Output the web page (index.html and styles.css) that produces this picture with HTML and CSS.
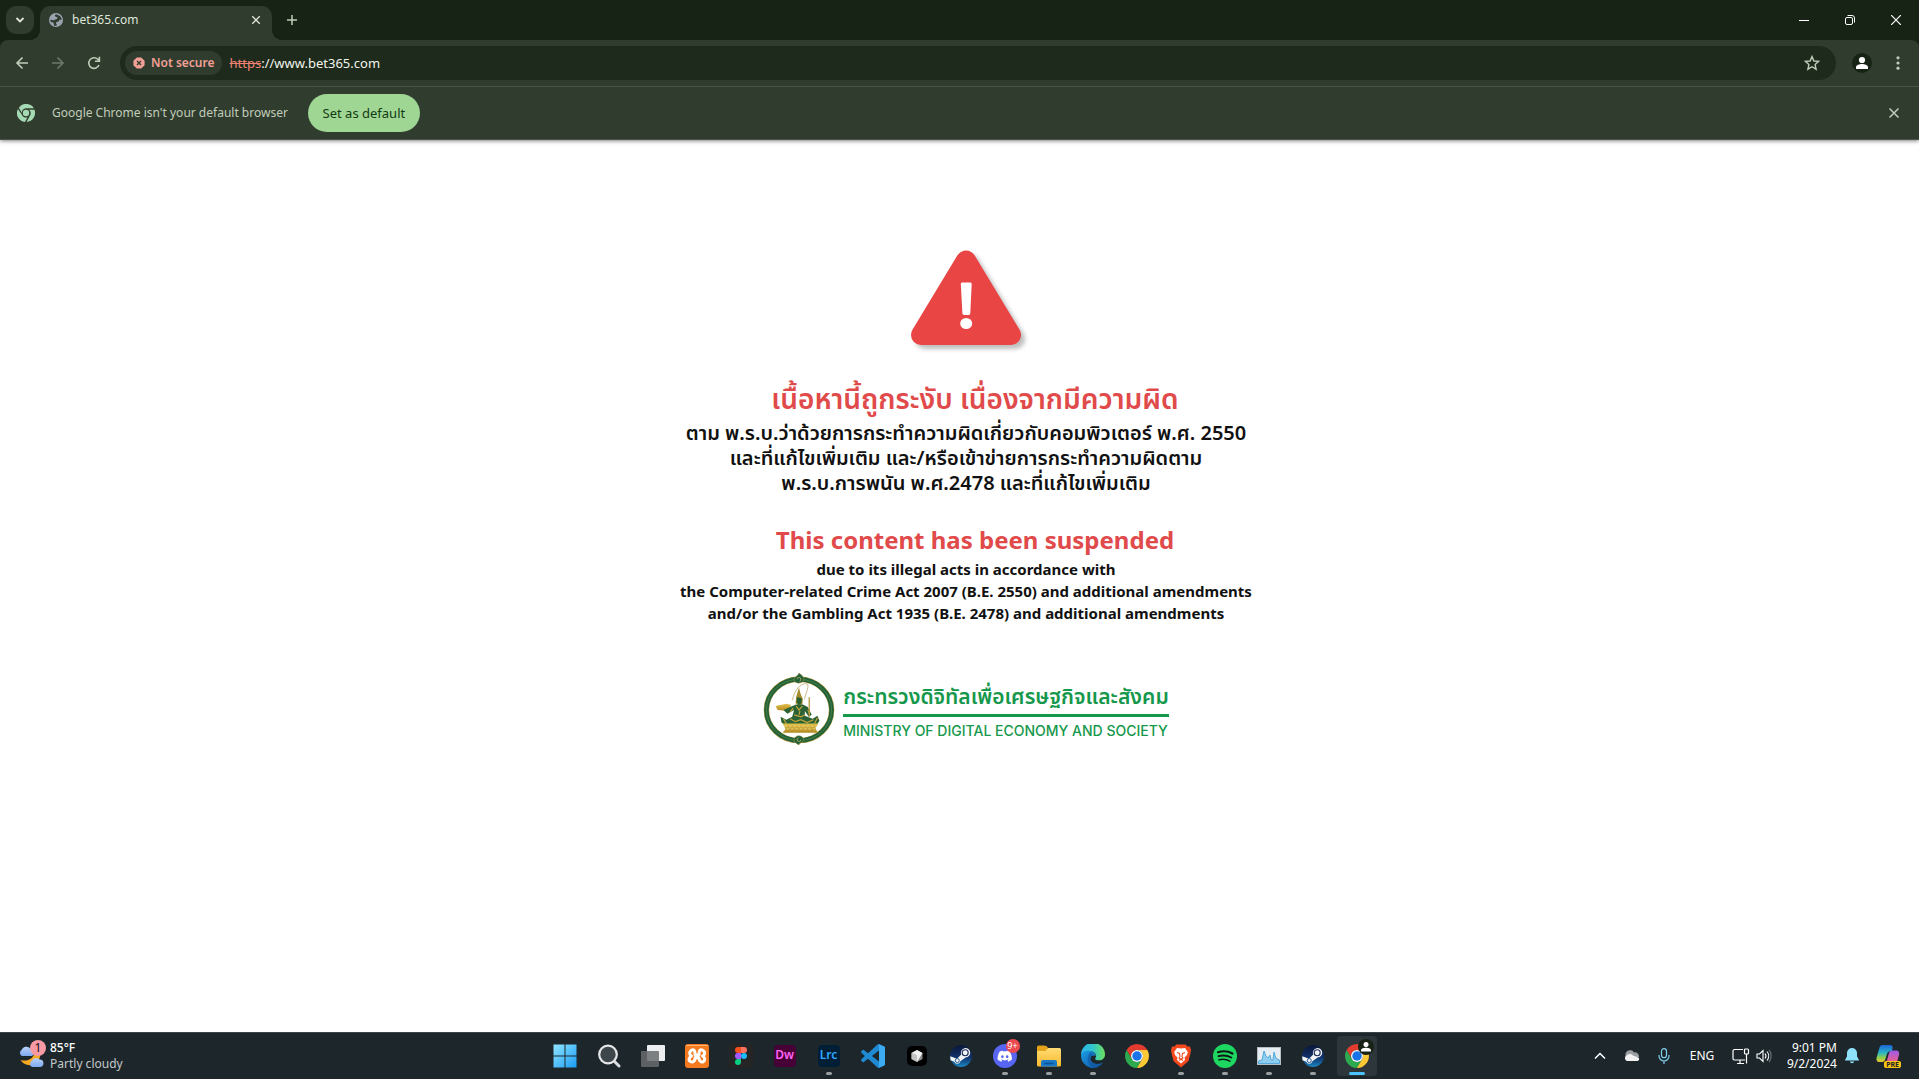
FILE: index.html
```html
<!DOCTYPE html>
<html lang="en">
<head>
<meta charset="utf-8">
<meta name="viewport" content="width=device-width, initial-scale=1">
<title>bet365.com</title>
<link rel="stylesheet" href="styles.css">
</head>
<body>
<svg class="defs" width="0" height="0" aria-hidden="true">
  <defs>
    <linearGradient id="win" x1="0" y1="0" x2="1" y2="1"><stop offset="0" stop-color="#8fe6ff"/><stop offset="1" stop-color="#1a9bf5"/></linearGradient>
    <linearGradient id="steam-bg" x1="0" y1="0" x2="0" y2="1"><stop offset="0" stop-color="#0b1638"/><stop offset=".55" stop-color="#10306a"/><stop offset="1" stop-color="#1b86c2"/></linearGradient>
    <linearGradient id="edge-top" x1="0" y1="0" x2="1" y2="0"><stop offset="0" stop-color="#2fb4ee"/><stop offset=".5" stop-color="#2fc6c9"/><stop offset="1" stop-color="#6ee05a"/></linearGradient>
    <linearGradient id="edge-low" x1="0" y1="0" x2="1" y2="1"><stop offset="0" stop-color="#1b9de8"/><stop offset="1" stop-color="#0f4f9c"/></linearGradient>
    <linearGradient id="folder" x1="0" y1="0" x2="0" y2="1"><stop offset="0" stop-color="#ffdc73"/><stop offset="1" stop-color="#f7b92d"/></linearGradient>
    <linearGradient id="gold" x1="0" y1="0" x2="0" y2="1"><stop offset="0" stop-color="#e3c14b"/><stop offset="1" stop-color="#b28a22"/></linearGradient>
    <linearGradient id="cloud" x1="0" y1="0" x2="0" y2="1"><stop offset="0" stop-color="#b9d3fb"/><stop offset="1" stop-color="#7ea8ee"/></linearGradient>
    <linearGradient id="cop-a" x1="0" y1="0" x2="0" y2="1"><stop offset="0" stop-color="#1c63d8"/><stop offset=".45" stop-color="#29b5c8"/><stop offset=".75" stop-color="#8ed04a"/><stop offset="1" stop-color="#f4c430"/></linearGradient>
    <linearGradient id="cop-b" x1="0" y1="0" x2="0" y2="1"><stop offset="0" stop-color="#9b5be8"/><stop offset="1" stop-color="#f0608a"/></linearGradient>
    <symbol id="steam" viewBox="0 0 24 24">
      <circle cx="12" cy="12" r="11" fill="url(#steam-bg)"/>
      <path d="M1.2 12.2 8 14.8 12.2 10.500A4.700 4.700 0 1 1 16.600 13.400L11.400 17.300A3.200 3.200 0 0 1 5.300 17.800L1.500 16.200Z" fill="#f2f5f8"/>
      <circle cx="16.200" cy="8.800" r="3" fill="none" stroke="#1a2c55" stroke-width="1.100"/>
      <circle cx="8.300" cy="16.500" r="2" fill="none" stroke="#1d4a80" stroke-width=".9"/>
    </symbol>
    <symbol id="chrome" viewBox="0 0 48 48">
      <path fill="#e33b2e" d="M24 12H44.780A24 24 0 0 0 3.220 12L13.610 30A12 12 0 0 1 24 12Z"/>
      <path fill="#2da94f" d="M13.610 30 3.220 12A24 24 0 0 0 24 48L34.390 30A12 12 0 0 1 13.610 30Z"/>
      <path fill="#fcc934" d="M34.390 30 24 48A24 24 0 0 0 44.780 12H24A12 12 0 0 1 34.390 30Z"/>
      <circle cx="24" cy="24" r="12" fill="#fff"/><circle cx="24" cy="24" r="9.500" fill="#1a73e8"/>
    </symbol>
    <symbol id="cross" viewBox="0 0 12 12"><path d="M1.500 1.500 10.500 10.500M10.500 1.500 1.500 10.500" fill="none" stroke="currentColor" stroke-width="1.500"/></symbol>
  </defs>
</svg>

<header class="browser">
  <div class="tabstrip">
    <button class="tab-search" aria-label="Search tabs"><svg width="10" height="10" viewBox="0 0 10 10"><path d="M1.500 3 5 6.500 8.500 3" fill="none" stroke="currentColor" stroke-width="1.800"/></svg></button>
    <div class="tab">
      <svg width="14" height="14" viewBox="0 0 14 14"><circle cx="7" cy="7" r="7" fill="#9aa3ae"/><path d="M6.500 1.500C5 3 7 4 8 4.200S8.500 6 7 6.200 5.500 7.500 4.500 7.300 1.500 6.200 1.200 7.500c.3 2 1.400 1.700 2.300 1.800S5 10.500 5 12.500c1 .5 2.500.3 3-.2C8 11 6.500 10.500 7 9.500S10 9 10 8s.5-1.500 2.700-1.300C12.500 4 10 1.500 6.500 1.500Z" fill="#303c2e"/></svg>
      <span class="tab-title">bet365.com</span>
      <button class="tab-close" aria-label="Close tab"><svg width="10" height="10"><use href="#cross"/></svg></button>
    </div>
    <button class="new-tab" aria-label="New tab"><svg width="12" height="12" viewBox="0 0 12 12"><path d="M6 1V11M1 6H11" stroke="currentColor" stroke-width="1.500"/></svg></button>
    <div class="window-controls">
      <button aria-label="Minimize"><svg width="10" height="10" viewBox="0 0 10 10"><path d="M0 5.500H10" stroke="currentColor"/></svg></button>
      <button aria-label="Restore"><svg width="10" height="10" viewBox="0 0 10 10" fill="none" stroke="currentColor"><rect x=".5" y="2.500" width="7" height="7" rx="1.500"/><path d="M2.500.5H7A2.500 2.500 0 0 1 9.500 3V7.500"/></svg></button>
      <button aria-label="Close"><svg width="10" height="10" viewBox="0 0 10 10"><path d="M0 0 10 10M10 0 0 10" stroke="currentColor" stroke-width="1.200"/></svg></button>
    </div>
  </div>

  <div class="toolbar">
    <button class="tool" aria-label="Back"><svg width="14" height="14" viewBox="0 0 14 14" fill="none" stroke="currentColor" stroke-width="1.600"><path d="M13 7H2M7.500 1.500 2 7 7.500 12.500"/></svg></button>
    <button class="tool dim" aria-label="Forward"><svg width="14" height="14" viewBox="0 0 14 14" fill="none" stroke="currentColor" stroke-width="1.600"><path d="M1 7H12M6.500 1.500 12 7 6.500 12.500"/></svg></button>
    <button class="tool" aria-label="Reload"><svg width="14" height="14" viewBox="0 0 14 14" fill="none" stroke="currentColor" stroke-width="1.600"><path d="M12 9A5.300 5.300 0 1 1 10.800 3.300L12.300 4.800M12.400.8V5.200H8"/></svg></button>
    <div class="omnibox">
      <button class="chip"><svg width="12" height="12" viewBox="0 0 12 12"><path d="M3.800.4H8.200L11.600 3.800V8.200L8.200 11.600H3.800L.4 8.200V3.800Z" fill="#f2a097"/><path d="M4 4 8 8M8 4 4 8" stroke="#303c2e" stroke-width="1.400"/></svg>Not secure</button>
      <label class="url"><s>https</s><input type="text" value="://www.bet365.com" aria-label="Address"></label>
      <button class="star" aria-label="Bookmark this tab"><svg width="16" height="16" viewBox="0 0 16 16"><path d="M8 1.600 9.900 6 14.600 6.400 11.100 9.500 12.100 14.200 8 11.700 3.900 14.200 4.900 9.500 1.400 6.400 6.100 6Z" fill="none" stroke="currentColor" stroke-width="1.400"/></svg></button>
    </div>
    <button class="tool profile" aria-label="Profile"><svg width="20" height="20" viewBox="0 0 20 20"><circle cx="10" cy="10" r="10" fill="#172315"/><circle cx="10" cy="7" r="3.100" fill="#fff"/><path d="M4 16V14.200C4 12 7.500 11 10 11S16 12 16 14.200V16Z" fill="#fff"/></svg></button>
    <button class="tool" aria-label="Menu"><svg width="4" height="14" viewBox="0 0 4 14" fill="currentColor"><circle cx="2" cy="1.800" r="1.600"/><circle cx="2" cy="7" r="1.600"/><circle cx="2" cy="12.200" r="1.600"/></svg></button>
  </div>

  <div class="infobar">
    <svg width="18" height="18" viewBox="0 0 48 48" fill="#a5d9b4"><path d="M24 11H45A24 24 0 0 0 5 10L13 24A11.500 11.500 0 0 1 24 11Z"/><path d="M12.500 28 2.500 13A24 24 0 0 0 21 48L28 35.500A12 12 0 0 1 12.500 28Z"/><path d="M35.500 29 25.500 48A24 24 0 0 0 46.500 15H32A12 12 0 0 1 35.500 29Z"/><circle cx="24" cy="24" r="8.500"/></svg>
    <span>Google Chrome isn't your default browser</span>
    <button class="set-default">Set as default</button>
    <button class="info-close" aria-label="Dismiss"><svg width="12" height="12"><use href="#cross"/></svg></button>
  </div>
</header>

<main class="page">
  <svg class="warning" width="116" height="102" viewBox="0 0 116 102" role="img" aria-label="Warning">
    <path d="M55 10.500 100 85H10Z" fill="#e94545" stroke="#e94545" stroke-width="20" stroke-linejoin="round"/>
    <path d="M51 32.500H59.500Q60.800 32.500 60.700 34L59.300 63Q59.200 65 58 65H53Q51.500 65 51.400 63L49.800 34Q49.700 32.500 51 32.500Z" fill="#fff"/>
    <ellipse cx="55.200" cy="73.500" rx="6" ry="5.500" fill="#fff"/>
  </svg>
  <section class="notice thai" lang="th">
    <h1>เนื้อหานี้ถูกระงับ เนื่องจากมีความผิด</h1>
    <p>ตาม พ.ร.บ.ว่าด้วยการกระทำความผิดเกี่ยวกับคอมพิวเตอร์ พ.ศ. 2550<br>และที่แก้ไขเพิ่มเติม และ/หรือเข้าข่ายการกระทำความผิดตาม<br>พ.ร.บ.การพนัน พ.ศ.2478 และที่แก้ไขเพิ่มเติม</p>
  </section>
  <section class="notice english">
    <h1>This content has been suspended</h1>
    <p>due to its illegal acts in accordance with<br>the Computer-related Crime Act 2007 (B.E. 2550) and additional amendments<br>and/or the Gambling Act 1935 (B.E. 2478) and additional amendments</p>
  </section>
  <div class="ministry">
    <svg width="72" height="72" viewBox="0 0 72 74" role="img" aria-label="Ministry emblem">
      <ellipse cx="36" cy="38" rx="33.500" ry="31.500" fill="#fff" stroke="#b79b3c" stroke-width="5.600"/>
      <ellipse cx="36" cy="38" rx="33.500" ry="31.500" fill="none" stroke="#20603a" stroke-width="4.600"/>
      <ellipse cx="36" cy="38" rx="33.500" ry="31.500" fill="none" stroke="#5f8a45" stroke-width=".7"/>
      <path d="M36 0C39 2 41 4 41 6.500S38 10.500 35.500 10.500 30.500 8.500 31 6C32 3.500 35 3 36 0ZM36 74C33 72.500 31 71 31 68.500S34 64 36.500 64.500 41.500 67 40.500 69.500 37 71 36 74Z" fill="#20603a" stroke="#b79b3c" stroke-width=".5"/>
      <path d="M34 6.500a2 2 0 1 1 2.500 2M38 68.500a2 2 0 1 1-2.500-2" fill="none" stroke="#c9b25a" stroke-width=".8"/>
      <path d="M29 28C32 16 39 9 45 11.500 46 16 43 21 41.500 27" fill="none" stroke="#c8b987" stroke-width="1"/>
      <path d="M36 15 37.500 21 40 27 39.500 32 36 34 32.500 31 33 25Z" fill="#a78a2e"/>
      <path d="M34 25 39 26 38.500 31 36 33 33.500 30Z" fill="#275f35"/>
      <path d="M12 34 23 31.500 28 33 25 39 14 38Z" fill="url(#gold)"/>
      <path d="M27 35 33 32.500H40L45 35 49 43 46 45 42 39 42 44 50 47 55 44 57 49 54 54 22 54 18 51 17 45 23 48 29 45 31 38 24 42 20 38Z" fill="#2a6236"/>
      <path d="M33 34 36 38 39.500 34M31 43 38 45 42 43M27 47 32 50 38 48 44 51 51 48M20 47 23 52M55 46 52 52M37 39 36 43M30 36 27 40M45 38 47 42" fill="none" stroke="#c6a43b" stroke-width="1.200"/>
      <path d="M46.500 25V45" stroke="#b69537" stroke-width="1.300"/>
      <path d="M19 52H56L53 56 54 59 56 61.500H19L22 58 21 55Z" fill="url(#gold)"/>
      <path d="M21 54.500H54M23 57.500H53" stroke="#efd980" stroke-width=".9" stroke-dasharray="3 1.500"/>
    </svg>
    <div class="ministry-name">
      <span class="name-th" lang="th">กระทรวงดิจิทัลเพื่อเศรษฐกิจและสังคม</span>
      <span class="name-en">MINISTRY OF DIGITAL ECONOMY AND SOCIETY</span>
    </div>
  </div>
</main>

<footer class="taskbar">
  <button class="weather">
    <span class="weather-icon">
      <svg width="26" height="28" viewBox="0 0 26 28"><path d="M22 8C23 15 21 20 17 22 11 25 5 22 2.500 18 9 20 16 17 17 9Z" fill="#f7a823"/><path d="M4 14A3.500 3.500 0 0 1 3.500 8 5 5 0 0 1 12 6.500 4 4 0 0 1 14 14Z" fill="url(#cloud)"/><path d="M14 25A3.500 3.500 0 0 1 13.500 19 5 5 0 0 1 21.500 17.500 3.800 3.800 0 0 1 22.500 25Z" fill="url(#cloud)"/></svg>
      <span class="badge pink">1</span>
    </span>
    <span class="weather-text"><b>85°F</b><span>Partly cloudy</span></span>
  </button>

  <nav class="apps" aria-label="Taskbar">
    <button aria-label="Start"><svg width="24" height="24" viewBox="0 0 24 24" fill="url(#win)"><path d="M.5.5H11.500V11.500H.5ZM12.500.5H23.500V11.500H12.500ZM.5 12.500H11.500V23.500H.5ZM12.500 12.500H23.500V23.500H12.500Z"/></svg></button>
    <button aria-label="Search"><svg width="24" height="24" viewBox="0 0 24 24"><path d="M17 17 22 22" stroke="#d9dcde" stroke-width="3" stroke-linecap="round"/><circle cx="11" cy="10.500" r="8.800" fill="#3d474b" stroke="#e4e6e7" stroke-width="2.200"/></svg></button>
    <button aria-label="Task view"><svg width="24" height="24" viewBox="0 0 24 24"><rect x="6" y="1" width="18" height="16" rx="1" fill="#eceeef"/><rect x="0" y="7" width="18" height="16" rx="1" fill="#686c6e" fill-opacity=".85"/></svg></button>
    <button aria-label="XAMPP"><svg width="24" height="24" viewBox="0 0 24 24"><rect width="24" height="24" rx="3" fill="#f47a20"/><path d="M1 1.500H23" stroke="#ffb274"/><g fill="none" stroke="#fff" stroke-width="3" stroke-linecap="round" stroke-linejoin="round"><path d="M6 6.500C9 4.500 10 7 10 9.500V11H14V9.500C14 7 15 4.500 18 6.500S19.500 11 17.500 12C20 13.500 20.500 16 18.500 17.500S14 17 14 14M10 14C10 17 8 19 5.500 17.500S4 13.500 6.500 12C4.500 11 4 8.500 6 6.500M10 14H14"/></g></svg></button>
    <button aria-label="Figma"><svg width="24" height="24" viewBox="0 0 24 24"><rect width="24" height="24" rx="3" fill="#252525"/><path d="M12 3H9a3 3 0 0 0 0 6h3Z" fill="#f24e1e"/><path d="M12 3h3a3 3 0 0 1 0 6h-3Z" fill="#ff7262"/><path d="M12 9H9a3 3 0 0 0 0 6h3Z" fill="#a259ff"/><circle cx="15" cy="12" r="3" fill="#1abcfe"/><path d="M12 15H9a3 3 0 1 0 3 3Z" fill="#0acf83"/></svg></button>
    <button aria-label="Dreamweaver"><span class="adobe dw">Dw</span></button>
    <button class="running" aria-label="Lightroom Classic"><span class="adobe lrc">Lrc</span></button>
    <button aria-label="Visual Studio Code"><svg width="24" height="24" viewBox="0 0 24 24"><path fill="#1f8ad2" d="M23.150 2.587L18.210.21a1.494 1.494 0 0 0-1.705.29l-9.460 8.630-4.120-3.128a.999.999 0 0 0-1.276.057L.327 7.261A1 1 0 0 0 .326 8.740L3.899 12 .326 15.260a1 1 0 0 0 .001 1.479L1.650 17.940a.999.999 0 0 0 1.276.057l4.120-3.128 9.460 8.630a1.492 1.492 0 0 0 1.704.29l4.942-2.377A1.500 1.500 0 0 0 24 20.060V3.939a1.500 1.500 0 0 0-.85-1.352zm-5.146 14.861L10.826 12l7.178-5.448v10.896z"/><path fill="#3cabf2" d="M18 .3 23.150 2.587A1.500 1.500 0 0 1 24 3.939V20.060A1.500 1.500 0 0 1 23.150 21.400L18 23.700Z"/></svg></button>
    <button aria-label="Cursor"><svg width="20" height="20" viewBox="0 0 20 20"><rect width="20" height="20" rx="5" fill="#000"/><path d="M10 4 15.500 7V13L10 16 4.500 13V7Z" fill="#8d8d8d"/><path d="M4.500 7 10 4 15.500 7 10 16V9.500Z" fill="#f1f1f1"/><path d="M4.500 7 10 9.500V16L4.500 13Z" fill="#c4c4c4"/></svg></button>
    <button aria-label="Steam"><svg width="24" height="24"><use href="#steam"/></svg></button>
    <button class="running" aria-label="Discord"><svg width="24" height="24" viewBox="0 0 24 24"><circle cx="12" cy="12" r="12" fill="#5865f2"/><path transform="translate(4.600 5) scale(.6)" fill="#fff" d="M20.317 4.370a19.791 19.791 0 0 0-4.885-1.515.074.074 0 0 0-.079.037c-.211.375-.445.865-.608 1.250-1.845-.276-3.680-.276-5.487 0-.164-.393-.406-.874-.618-1.250a.077.077 0 0 0-.079-.037A19.736 19.736 0 0 0 3.676 4.370C.533 9.046-.319 13.580.099 18.058c2.053 1.508 4.041 2.423 5.993 3.030.5-.6.950-1.300 1.310-2.022a13 13 0 0 1-1.914-1.100l.372-.291c3.928 1.793 8.180 1.793 12.061 0l.451.302a12.300 12.300 0 0 1-1.914 1.100c.36.700.810 1.400 1.310 2.020 1.961-.607 3.950-1.522 6.002-3.030.500-5.177-.838-9.674-3.549-13.660zM8.020 15.331c-1.183 0-2.157-1.086-2.157-2.419s.956-2.419 2.157-2.419 2.176 1.095 2.157 2.419c0 1.333-.956 2.419-2.157 2.419zm7.975 0c-1.183 0-2.157-1.086-2.157-2.419s.955-2.419 2.157-2.419 2.176 1.095 2.157 2.419c0 1.333-.946 2.419-2.157 2.419z"/></svg><span class="badge red">9+</span></button>
    <button class="running" aria-label="File Explorer"><svg width="24" height="24" viewBox="0 0 24 24"><path d="M0 3A1.500 1.500 0 0 1 1.500 1.500H8L10.500 4H0Z" fill="#e09b12"/><path d="M0 3V8H9L11 4 9.500 2Z" fill="#e3a31c"/><path d="M0 7H8.500L11 4H22.500A1.500 1.500 0 0 1 24 5.500V21A1.500 1.500 0 0 1 22.500 22.500H1.500A1.500 1.500 0 0 1 0 21Z" fill="url(#folder)"/><path d="M4 22.500V18A2 2 0 0 1 6 16H18A2 2 0 0 1 20 18V22.500Z" fill="#1978c8"/><path d="M8 19.500H16" stroke="#0d4f92" stroke-width="1.500" stroke-linecap="round"/></svg></button>
    <button class="running" aria-label="Edge"><svg width="24" height="24" viewBox="0 0 24 24"><path d="M0 11A12 12 0 0 1 24 10.500C24 14 21.500 16.300 18 16.300 15 16.300 13.800 15.500 14.300 14.500 16.500 11 13.500 7 9 7 5 7 1.500 8.500 0 11Z" fill="url(#edge-top)"/><path d="M0 12C0 8.500 4 6.500 8 6.800 12 7 14.500 9.500 14.700 12 12 10.500 9.500 12 9.500 14.500 9.500 19 15.500 22 22 18.500A12 12 0 0 1 0 12Z" fill="url(#edge-low)"/><path d="M9.200 8.500C5 12 6 20.500 13 23.900A12 12 0 0 0 22 18.500C16 21.500 9.500 19 9.500 14.500 9.500 12 11 11 12.500 11 12 9.500 10.500 8.500 9.200 8.500Z" fill="#12579f" fill-opacity=".65"/></svg></button>
    <button aria-label="Google Chrome"><svg width="24" height="24"><use href="#chrome"/></svg></button>
    <button class="running" aria-label="Brave"><svg width="24" height="24" viewBox="0 0 24 24"><path d="M7.500.5H16.500L18.500 2.500 21 2.500 22 6 21.500 9 19.500 17 12 23.500 4.500 17 2.500 9 2 6 3 2.500H5.500Z" fill="#f4491f"/><path d="M12 4.500 16 4 18.800 8 18 11 15.500 13.500 16 16 12 19.500 8 16 8.500 13.500 6 11 5.200 8 8 4Z" fill="#fff"/><path d="M8 8.500 10.500 9.500 11 12.500 10 14 12 15.200 14 14 13 12.500 13.500 9.500 16 8.500M10 16.500 12 15.200 14 16.500" fill="none" stroke="#f4491f" stroke-width="1.100"/></svg></button>
    <button class="running" aria-label="Spotify"><svg width="24" height="24" viewBox="0 0 24 24"><circle cx="12" cy="12" r="12" fill="#1ed760"/><g fill="none" stroke="#101814" stroke-linecap="round"><path d="M5 8.200C10 6.700 15.500 7.200 19.500 9.500" stroke-width="2.200"/><path d="M5.500 12.200C10 10.900 14.500 11.500 18.300 13.500" stroke-width="1.900"/><path d="M6 15.800C10 14.800 13.500 15.200 16.900 17.100" stroke-width="1.600"/></g></svg></button>
    <button class="running" aria-label="Resource Monitor"><svg width="24" height="18" viewBox="0 0 24 18"><rect x=".5" y=".5" width="23" height="17" fill="#e6eef4" stroke="#b8bec3"/><path d="M1.500 14 5 13 7 4 9 9 11 11 13 8 14 13 16 13 17 5 18.500 10 20 12 22.500 13V16.500H1.500Z" fill="#8fcdf0" stroke="#3b9bd4" stroke-width=".8"/></svg></button>
    <button class="running" aria-label="Steam window"><svg width="24" height="24"><use href="#steam"/></svg></button>
    <button class="active" aria-label="Google Chrome window"><svg width="24" height="24"><use href="#chrome"/></svg><svg class="profile-badge" width="16" height="16" viewBox="0 0 16 16"><circle cx="8" cy="8" r="8" fill="#172315"/><circle cx="8" cy="5.500" r="2.500" fill="#fff"/><path d="M3 12.500V11.300C3 9.500 6 8.800 8 8.800S13 9.500 13 11.300V12.500Z" fill="#fff"/></svg></button>
  </nav>

  <div class="tray">
    <button class="small" aria-label="Show hidden icons"><svg width="12" height="8" viewBox="0 0 12 8"><path d="M1 6.500 6 1.500 11 6.500" fill="none" stroke="#fff" stroke-width="1.500"/></svg></button>
    <button class="small" aria-label="OneDrive"><svg width="16" height="12" viewBox="0 0 16 12"><path d="M2 7A4.500 4.500 0 0 1 10 2.500 4 4 0 0 1 15 7Z" fill="#9b9fa1"/><path d="M3 11A3 3 0 0 1 3 5.300 4.500 4.500 0 0 1 9 5.500L14.500 7.500A2 2 0 0 1 13.500 11Z" fill="#f1f1f1"/></svg></button>
    <button class="small" aria-label="Microphone"><svg width="12" height="16" viewBox="0 0 12 16" fill="none" stroke="#7fd0ee" stroke-width="1.200"><rect x="3.500" y=".7" width="5" height="9" rx="2.500"/><path d="M1 7V8A5 5 0 0 0 11 8V7M6 13V16"/></svg></button>
    <button class="lang">ENG</button>
    <button class="status" aria-label="Network and volume"><svg width="18" height="17" viewBox="0 0 18 17" fill="none" stroke="#fff" stroke-width="1.200"><path d="M11 1.500H2.500A1.500 1.500 0 0 0 1 3V10.500A1.500 1.500 0 0 0 2.500 12H13M5 15.500H12M8 12V15.500M14.500 6V15.500"/><rect x="12.500" y="1" width="4" height="5" rx="1"/></svg><svg width="17" height="14" viewBox="0 0 17 14" fill="none" stroke="#fff" stroke-width="1.100"><path d="M1 5H3.500L7 1.500V12.500L3.500 9H1ZM9 4.500A4 4 0 0 1 9 9.500M11 2.500A7 7 0 0 1 11 11.500"/><path d="M13 .8A10 10 0 0 1 13 13.200" stroke="#6d7578"/></svg></button>
    <button class="clock"><span>9:01 PM</span><span>9/2/2024</span></button>
    <button class="bell" aria-label="Notifications"><svg width="14" height="16" viewBox="0 0 14 16" fill="#8fe1fb"><path d="M7 0A5 5 0 0 1 12 5V8.500L13.800 11.500V12.500H.2V11.500L2 8.500V5A5 5 0 0 1 7 0ZM4.800 13.500H9.200A2.300 2.300 0 0 1 4.800 13.500Z"/></svg></button>
    <button class="copilot" aria-label="Copilot preview"><svg width="24" height="24" viewBox="0 0 24 24"><path d="M6 1H14C16 1 17 2.500 16.500 4.500L15.500 7.500C13 6.500 11.500 8.500 11 10L9 16C8.500 17.500 7 18 5.500 18H3C1 18 0 16 .5 14L3.500 3.500C4 2 5 1 6 1Z" fill="url(#cop-a)"/><path d="M16 6.500H20C22.500 6.500 23.800 8.500 23 11L21 18H10.500L13 9C13.500 7.500 14.500 6.500 16 6.500Z" fill="url(#cop-b)"/></svg><span class="pre">PRE</span></button>
  </div>
</footer>
</body>
</html>
```

FILE: styles.css
```css
:root {
  --frame: #172315;
  --bar: #303c2e;
  --text: #dfe6d9;
  --muted: #c1ccba;
  --ui: "Segoe UI", "Noto Sans", "Open Sans", sans-serif;
}

* { box-sizing: border-box; }

body {
  margin: 0;
  min-height: 100vh;
  display: flex;
  flex-direction: column;
  background: #fff;
  font-family: var(--ui);
  font-size: 12px;
  line-height: 16px;
}

button {
  display: flex;
  align-items: center;
  justify-content: center;
  padding: 0;
  border: 0;
  background: none;
  color: inherit;
  font: inherit;
}

svg { display: block; flex: none; }
.defs { position: absolute; }

/* Browser frame */
.browser {
  background: var(--frame);
  color: var(--text);
  box-shadow: 0 1px 4px rgba(0, 0, 0, .5);
}

.tabstrip {
  display: flex;
  align-items: center;
  height: 40px;
  padding-left: 6px;
}

.tab-search {
  width: 28px;
  height: 28px;
  border-radius: 10px;
  background: var(--bar);
}

.tab {
  position: relative;
  align-self: flex-end;
  display: flex;
  align-items: center;
  gap: 9px;
  width: 232px;
  height: 34px;
  margin-left: 6px;
  padding: 0 8px 6px 9px;
  border-radius: 10px 10px 0 0;
  background: var(--bar);
}

.tab::before,
.tab::after {
  content: "";
  position: absolute;
  bottom: 0;
  width: 10px;
  height: 10px;
}

.tab::before {
  left: -10px;
  background: radial-gradient(circle at 0 0, transparent 10px, var(--bar) 10px);
}

.tab::after {
  right: -10px;
  background: radial-gradient(circle at 100% 0, transparent 10px, var(--bar) 10px);
}

.tab-title { flex: 1; }
.tab-close { width: 16px; height: 16px; }
.new-tab { width: 28px; height: 28px; margin-left: 6px; color: var(--muted); }

.window-controls {
  display: flex;
  margin-left: auto;
  color: #fff;
}

.window-controls button { width: 46px; height: 40px; }

.toolbar {
  display: flex;
  align-items: center;
  height: 46px;
  padding: 0 3px 0 4px;
  border-radius: 8px 8px 0 0;
  background: var(--bar);
}

.tool { width: 36px; height: 34px; color: var(--muted); }
.dim { color: #6d7a69; }
.profile { margin-left: 8px; }

.omnibox {
  flex: 1;
  display: flex;
  align-items: center;
  height: 34px;
  margin-left: 8px;
  padding: 0 12px 0 5px;
  border-radius: 17px;
  background: #1e2a1b;
}

.chip {
  gap: 6px;
  height: 24px;
  padding: 0 7px 0 8px;
  border-radius: 12px;
  background: var(--bar);
  color: #f2a097;
  font-weight: 600;
}

.url {
  flex: 1;
  display: flex;
  align-items: center;
  margin-left: 8px;
  font-size: 13px;
}

.url s { color: #ee8373; }

.url input {
  flex: 1;
  padding: 0;
  border: 0;
  background: none;
  color: #f0f4ec;
  font: inherit;
}

.star { width: 24px; height: 24px; color: var(--muted); }

.infobar {
  display: flex;
  align-items: center;
  height: 54px;
  padding: 0 13px 0 17px;
  border-top: 1px solid #4a524b;
  border-bottom: 1px solid #4a524b;
  background: var(--bar);
  color: var(--muted);
}

.infobar span { margin: 0 20px 0 17px; }

.set-default {
  width: 112px;
  height: 38px;
  border-radius: 19px;
  background: #9fd694;
  color: #143a13;
  font-size: 13px;
}

.info-close { width: 24px; height: 24px; margin-left: auto; }

/* Blocked page notice */
.page {
  flex: 1;
  display: flex;
  flex-direction: column;
  align-items: center;
  padding: 110px 0 40px 13px;
  font-family: "Noto Sans", "Noto Sans Thai", sans-serif;
  color: #111;
  text-align: center;
}

.warning {
  margin-left: 6px;
  filter: drop-shadow(4px 4px 2px rgba(0, 0, 0, .25));
}

.notice { font-weight: 700; }

.notice h1 {
  margin: 0;
  padding-left: 18px;
  color: #e14a4a;
  font-size: 24px;
  line-height: 36px;
}

.notice p { margin: 0; }

.thai { margin-top: 28px; }
.thai h1 { font-size: 28px; font-weight: 600; }
.thai p { margin-top: 4px; font-size: 20px; font-weight: 600; line-height: 25px; }

.english { margin-top: 27px; }
.english p { font-size: 15px; line-height: 22px; }

.ministry {
  display: flex;
  align-items: center;
  gap: 8px;
  margin-top: 49px;
}

.ministry-name {
  display: flex;
  flex-direction: column;
  padding-top: 4px;
  color: #16984c;
  text-align: left;
}

.name-th {
  padding-bottom: 4px;
  border-bottom: 3px solid #16984c;
  font-size: 21px;
  font-weight: 600;
  line-height: 28px;
}

.name-en {
  padding-top: 4px;
  font-family: Inter, sans-serif;
  font-size: 14px;
  font-weight: 500;
  line-height: 20px;
}

/* Windows taskbar */
.taskbar {
  display: grid;
  grid-template-columns: 1fr auto 1fr;
  height: 47px;
  padding-left: 2px;
  border-top: 1px solid #3a4347;
  background: #1d272b;
  color: #fff;
}

.weather { justify-self: start; gap: 6px; padding-left: 16px; }
.weather-icon { position: relative; }
.weather-text { display: flex; flex-direction: column; text-align: left; color: #c3c7c9; }
.weather-text b { color: #fff; font-weight: 500; }

.badge {
  position: absolute;
  display: grid;
  place-items: center;
  border-radius: 50%;
}

.pink {
  top: -2px;
  right: -2px;
  width: 16px;
  height: 16px;
  background: #f79aa4;
  color: #111;
}

.red {
  top: 3px;
  right: 5px;
  width: 14px;
  height: 14px;
  background: #ec4b50;
  font-size: 9px;
  line-height: 14px;
}

.apps { display: flex; align-items: center; }

.apps button {
  position: relative;
  width: 40px;
  height: 40px;
  margin: 0 2px;
  border-radius: 4px;
}

.running::after,
.active::after {
  content: "";
  position: absolute;
  bottom: 1px;
  width: 6px;
  height: 3px;
  border-radius: 2px;
  background: #9a9fa1;
}

.apps .active { background: #2d373b; }
.active::after { width: 16px; background: #4cc2ff; }
.profile-badge { position: absolute; top: 3px; right: 3px; }

.adobe {
  width: 22px;
  height: 22px;
  border-radius: 4px;
  font-size: 12px;
  font-weight: 600;
  line-height: 20px;
}

.dw { background: #470137; color: #ff61f6; }
.lrc { background: #001e36; color: #31a8ff; }

.tray {
  display: flex;
  justify-self: end;
  align-items: center;
  padding-right: 10px;
}

.tray button { height: 40px; }
.small { width: 32px; }
.lang { width: 44px; }
.status { width: 56px; gap: 6px; }

.tray .clock {
  flex-direction: column;
  align-items: flex-end;
  min-width: 57px;
}

.bell { width: 30px; }
.copilot { position: relative; width: 42px; }

.pre {
  position: absolute;
  right: 8px;
  bottom: 8px;
  padding: 0 2px;
  border-radius: 2px;
  background: #f9c513;
  color: #222;
  font-size: 7px;
  font-weight: 700;
  line-height: 7px;
}
```
